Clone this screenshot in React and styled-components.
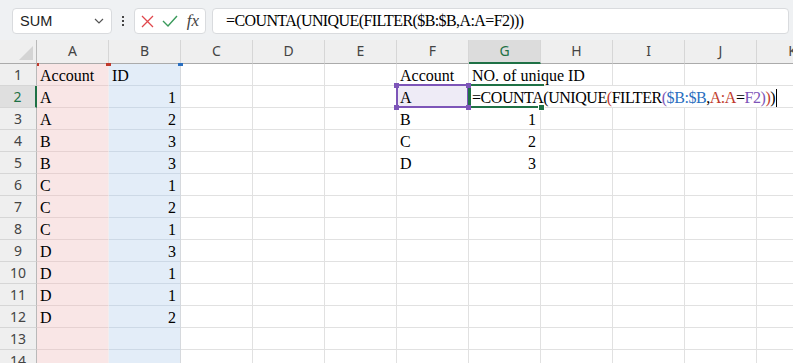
import React from 'react';
import styled, { createGlobalStyle, css } from 'styled-components';

const Global = createGlobalStyle`
  html, body { margin: 0; padding: 0; background: #fff; }
  body { font-family: "Liberation Serif", serif; overflow: hidden; }
`;

const Frame = styled.div`
  width: 793px;
  height: 363px;
  overflow: hidden;
  display: flex;
  flex-direction: column;
  background: #fff;
`;

const Toolbar = styled.div`
  flex: none;
  height: 40px;
  box-sizing: border-box;
  padding: 8px 4px 6px 12px;
  background: #eff1f3;
  display: flex;
  align-items: stretch;
`;

const Box = styled.div`
  box-sizing: border-box;
  background: #fff;
  border: 1px solid #d9dbde;
  border-radius: 4px;
  display: flex;
  align-items: center;
`;

const NameBox = styled(Box)`
  width: 100px;
  padding: 0 7px 0 7px;
  justify-content: space-between;
  font-family: "Liberation Sans", sans-serif;
  font-size: 14.5px;
  color: #222;
`;

const Dots = styled.div`
  width: 22px;
  display: flex;
  flex-direction: column;
  align-items: center;
  justify-content: center;
  gap: 2px;
  & > i {
    display: block;
    width: 2px;
    height: 2px;
    background: #444;
  }
`;

const ButtonsBox = styled(Box)`
  width: 72px;
  padding: 0 4px 0 6px;
  justify-content: space-between;
`;

const Fx = styled.span`
  font-family: "Liberation Serif", serif;
  font-style: italic;
  font-size: 17px;
  color: #444;
  padding-right: 2px;
`;

const FormulaBox = styled(Box)`
  flex: 1;
  margin-left: 6px;
  padding-left: 13px;
  font-family: "Liberation Serif", serif;
  font-size: 16px;
  letter-spacing: -0.6px;
  color: #000;
  white-space: nowrap;
`;

const Sheet = styled.div`
  display: grid;
  grid-template-columns: 37px repeat(11, 72px);
  grid-template-rows: 24px repeat(14, 22px);
`;

const Corner = styled.div`
  position: relative;
  box-sizing: border-box;
  background: #efefef;
  border-right: 1px solid #b9b9b9;
  border-bottom: 1px solid #ababab;
  display: flex;
  align-items: flex-end;
  justify-content: flex-end;
  padding: 0 3px 3px 0;
`;

const ColHead = styled.div`
  box-sizing: border-box;
  background: ${p => (p.$sel ? '#dcdcdc' : '#efefef')};
  border-right: 1px solid #d6d6d6;
  border-bottom: ${p => (p.$sel ? '2px solid #1e7145' : '1px solid #ababab')};
  font-family: "Noto Sans", sans-serif;
  font-size: 14px;
  line-height: 19px;
  padding-top: 1px;
  text-align: center;
  color: ${p => (p.$sel ? '#1e7145' : '#444')};
`;

const RowHead = styled.div`
  box-sizing: border-box;
  background: ${p => (p.$sel ? '#dfdfdf' : '#efefef')};
  border-right: ${p => (p.$sel ? '2px solid #1e7145' : '1px solid #b9b9b9')};
  border-bottom: 1px solid #d6d6d6;
  font-family: "Noto Sans", sans-serif;
  font-size: 14px;
  line-height: 18px;
  padding-top: 2px;
  text-align: center;
  color: ${p => (p.$sel ? '#1e7145' : '#444')};
`;

const fills = {
  pink: { bg: '#f9e6e6', h: '#e6d2d2', v: '#f3eded' },
  blue: { bg: '#e3edf8', h: '#cdd9e6', v: '#d6d9dd' },
  lav: { bg: '#eeebf6', h: '#e1e1e1', v: '#e1e1e1' },
  none: { bg: '#fff', h: '#e1e1e1', v: '#e1e1e1' },
};

const Cell = styled.div`
  position: relative;
  box-sizing: border-box;
  background: ${p => fills[p.$fill || 'none'].bg};
  border-right: 1px solid ${p => fills[p.$fill || 'none'].v};
  border-bottom: 1px solid ${p => fills[p.$fill || 'none'].h};
  padding: 2px 4px 0 3px;
  font-family: "Liberation Serif", serif;
  font-size: 16px;
  line-height: 19px;
  color: #000;
  white-space: nowrap;
  text-align: ${p => (p.$num ? 'right' : 'left')};
  ${p =>
    p.$span &&
    css`
      grid-column: span ${p.$span};
    `}
  ${p =>
    p.$tight &&
    css`
      letter-spacing: -0.45px;
    `}
`;

const RefFrame = styled.div`
  position: absolute;
  z-index: 3;
  top: -2px;
  left: -1px;
  right: -1px;
  bottom: -1px;
  border: 2px solid #7d55b8;
  pointer-events: none;
`;

const Handle = styled.i`
  position: absolute;
  z-index: 4;
  width: 5px;
  height: 5px;
  background: ${p => p.$c};
  ${p => (p.$top ? 'top: -3px;' : 'bottom: -3px;')}
  ${p => (p.$left ? 'left: -3px;' : 'right: -3px;')}
`;

const ActiveFrame = styled.div`
  position: absolute;
  z-index: 3;
  top: -2px;
  left: -1px;
  width: 73px;
  bottom: -1px;
  border: 2px solid #1e7145;
  border-left-width: 3px;
  border-right: none;
  pointer-events: none;
`;

const FillHandle = styled.i`
  position: absolute;
  z-index: 5;
  left: 69px;
  bottom: -4px;
  width: 5px;
  height: 5px;
  background: #1e7145;
  border: 1px solid #fff;
`;

const Marker = styled.i`
  position: absolute;
  z-index: 4;
  top: -1px;
  height: 3px;
  width: ${p => p.$w}px;
  background: ${p => p.$c};
  ${p => (p.$left ? 'left: 0;' : 'right: -3px;')}
`;

const Tok = styled.span`
  color: ${p => p.$c || '#000'};
`;

const Caret = styled.span`
  display: inline-block;
  width: 1px;
  height: 18px;
  background: #000;
  vertical-align: -4px;
  margin-left: 1px;
`;

const RED = '#c0392b';
const BLUE = '#2a6fc0';
const PURPLE = '#7d55b8';

const cols = ['A', 'B', 'C', 'D', 'E', 'F', 'G', 'H', 'I', 'J', 'K'];
const colA = ['Account', 'A', 'A', 'B', 'B', 'C', 'C', 'C', 'D', 'D', 'D', 'D', '', ''];
const colB = ['ID', '1', '2', '3', '3', '1', '2', '1', '3', '1', '1', '2', '', ''];
const colF = ['Account', 'A', 'B', 'C', 'D'];
const colG = ['NO. of unique ID', null, '1', '2', '3'];

function FormulaTokens() {
  return (
    <>
      <Tok>=COUNTA(UNIQUE</Tok>
      <Tok $c={RED}>(</Tok>
      <Tok>FILTER</Tok>
      <Tok $c={PURPLE}>(</Tok>
      <Tok $c={BLUE}>$B:$B</Tok>
      <Tok>,</Tok>
      <Tok $c={RED}>A:A</Tok>
      <Tok>=</Tok>
      <Tok $c={PURPLE}>F2</Tok>
      <Tok $c={PURPLE}>)</Tok>
      <Tok $c={RED}>)</Tok>
      <Tok>)</Tok>
      <Caret />
    </>
  );
}

function Row({ r }) {
  const i = r - 1;
  const cells = [];
  cells.push(
    <RowHead key="h" $sel={r === 2}>
      {r}
    </RowHead>
  );
  cells.push(
    <Cell key="A" $fill="pink">
      {r === 1 && <Marker $c={RED} $w={2} $left />}
      {r === 1 && <Marker $c={RED} $w={5} />}
      {colA[i]}
    </Cell>
  );
  cells.push(
    <Cell key="B" $fill="blue" $num={r > 1}>
      {r === 1 && <Marker $c={BLUE} $w={5} />}
      {colB[i]}
    </Cell>
  );
  ['C', 'D', 'E'].forEach(c => cells.push(<Cell key={c} />));
  if (r === 2) {
    cells.push(
      <Cell key="F" $fill="lav">
        <RefFrame />
        <Handle $c={PURPLE} $top $left />
        <Handle $c={PURPLE} $top />
        <Handle $c={PURPLE} $left />
        <Handle $c={PURPLE} />
        {colF[i]}
      </Cell>
    );
    cells.push(
      <Cell key="G" $span={5} $tight>
        <ActiveFrame />
        <FillHandle />
        <FormulaTokens />
      </Cell>
    );
    return cells;
  }
  cells.push(<Cell key="F">{colF[i] || ''}</Cell>);
  if (r === 1) {
    cells.push(
      <Cell key="G" $span={2}>
        {colG[i]}
      </Cell>
    );
    ['I', 'J', 'K'].forEach(c => cells.push(<Cell key={c} />));
    return cells;
  }
  cells.push(
    <Cell key="G" $num={r > 1}>
      {colG[i] || ''}
    </Cell>
  );
  ['H', 'I', 'J', 'K'].forEach(c => cells.push(<Cell key={c} />));
  return cells;
}

export default function App() {
  return (
    <Frame>
      <Global />
      <Toolbar>
        <NameBox>
          <span>SUM</span>
          <svg width="10" height="6" viewBox="0 0 10 6">
            <path d="M1 1 L5 5 L9 1" fill="none" stroke="#555" strokeWidth="1.2" />
          </svg>
        </NameBox>
        <Dots>
          <i />
          <i />
          <i />
        </Dots>
        <ButtonsBox>
          <svg width="13" height="13" viewBox="0 0 13 13">
            <path d="M1 1 L12 12 M12 1 L1 12" stroke="#e0474c" strokeWidth="1.3" fill="none" />
          </svg>
          <svg width="16" height="12" viewBox="0 0 16 12">
            <path d="M1 6 L6 11 L15 1" stroke="#3a9a5b" strokeWidth="1.4" fill="none" />
          </svg>
          <Fx>fx</Fx>
        </ButtonsBox>
        <FormulaBox>=COUNTA(UNIQUE(FILTER($B:$B,A:A=F2)))</FormulaBox>
      </Toolbar>
      <Sheet>
        <Corner>
          <svg width="14" height="14" viewBox="0 0 14 14">
            <path d="M14 0 L14 14 L0 14 Z" fill="#d4d4d4" />
          </svg>
        </Corner>
        {cols.map(c => (
          <ColHead key={c} $sel={c === 'G'}>
            {c}
          </ColHead>
        ))}
        {Array.from({ length: 14 }, (_, k) => (
          <Row key={k} r={k + 1} />
        ))}
      </Sheet>
    </Frame>
  );
}
